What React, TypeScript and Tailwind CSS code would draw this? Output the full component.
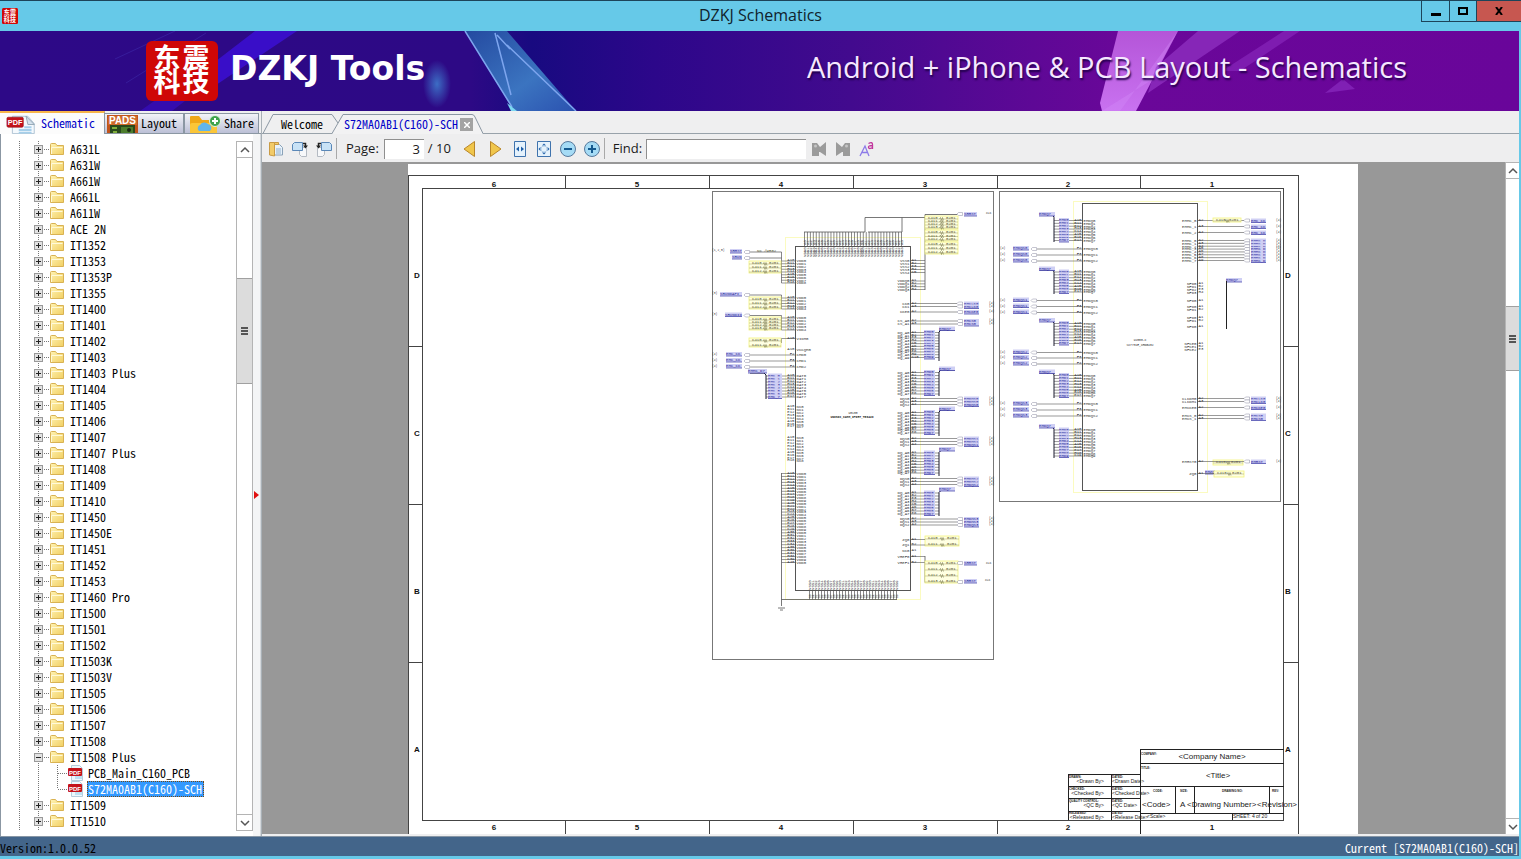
import React from "react";

const NAMES_TOP = [
  "A631L", "A631W", "A661W", "A661L", "A611W", "ACE 2N", "IT1352", "IT1353", "IT1353P", "IT1355",
  "IT1400", "IT1401", "IT1402", "IT1403", "IT1403 Plus", "IT1404", "IT1405", "IT1406", "IT1407",
  "IT1407 Plus", "IT1408", "IT1409", "IT1410", "IT1450", "IT1450E", "IT1451", "IT1452", "IT1453",
  "IT1460 Pro", "IT1500", "IT1501", "IT1502", "IT1503K", "IT1503V", "IT1505", "IT1506", "IT1507",
  "IT1508",
];
const NAMES_BOTTOM = ["IT1509", "IT1510"];

const SONG = "[font-family:'Noto_Sans_CJK_SC',sans-serif] [font-feature-settings:'hwid'] text-xs";
const SEGOE = "[font-family:'Open_Sans','Noto_Sans',sans-serif]";

/* ---------- icons ---------- */

function Seal({ className }: { className: string }) {
  return (
    <svg viewBox="0 0 72 60" preserveAspectRatio="none" overflow="visible" className={className} aria-hidden="true">
      <rect width="72" height="60" rx="6" fill="#cf0707" />
      <g fill="#fff" fontFamily="'Noto Sans CJK SC', sans-serif" fontWeight="700" fontSize="27" textAnchor="middle">
        <text x="21" y="27">东</text>
        <text x="50" y="27">震</text>
        <text x="21" y="51">科</text>
        <text x="50" y="51">技</text>
      </g>
    </svg>
  );
}

function PdfIcon({ className }: { className: string }) {
  return (
    <svg viewBox="0 0 34 20" className={className} aria-hidden="true">
      <path d="M7 1h17l7 8v11H7z" fill="#f4f9fd" stroke="#a9bfd0" />
      <path d="M22 1l9 9h-7z" fill="#d5e3ee" stroke="#7f93a3" strokeWidth=".8" />
      <path d="M20 12h8v2h-8zM14 15h14v2H14zM14 18h14v2H14z" fill="#a5cfea" />
      <rect x="1" y="2" width="18" height="11" rx="1.5" fill="#c4121a" stroke="#8c0a10" strokeWidth=".6" />
      <text x="10" y="10.5" textAnchor="middle" fontSize="8" fontWeight="700" fill="#fff" fontFamily="'Liberation Sans', sans-serif">PDF</text>
    </svg>
  );
}

function PadsIcon() {
  return (
    <svg viewBox="0 0 31 18" className="h-[18px] w-[31px]" aria-hidden="true">
      <rect width="31" height="18" fill="#c1541b" />
      <rect x="1" y="1" width="29" height="9" fill="#ce6a2a" />
      <text x="15.5" y="9" textAnchor="middle" fontSize="10" fontWeight="700" fill="#fff" fontFamily="'Liberation Sans', sans-serif">PADS</text>
      <rect x="3" y="10" width="25" height="8" fill="#2a4a1c" />
      <path d="M5 12h5v2H5zM6 16h4v2H6z" fill="#7fae3a" />
      <path d="M14 12h12v6H14z" fill="#4c7d2c" />
      <circle cx="22" cy="15" r="2" fill="#1b2a12" />
    </svg>
  );
}

function ShareIcon() {
  return (
    <svg viewBox="0 0 32 18" className="h-[18px] w-8" aria-hidden="true">
      <path d="M1 2q0-1 1-1h8l3 4h13q2 0 2 2v11H1z" fill="#f0a818" />
      <path d="M3 8h23q2 0 2 2v8H1v-8q0-2 2-2z" fill="#fbc638" />
      <path d="M10 16a3.500 3.500 0 0 1 1-6 5 5 0 0 1 8-1 4 4 0 0 1 2 7z" fill="#62b5ea" />
      <circle cx="26" cy="6" r="5.500" fill="#3fa34c" stroke="#e3f3e4" />
      <path d="M23 6h6M26 3v6" stroke="#fff" strokeWidth="2" />
    </svg>
  );
}

function Folder() {
  return (
    <svg viewBox="0 0 14 12" className="h-3 w-3.5 shrink-0" aria-hidden="true">
      <defs>
        <linearGradient id="folder" x1="0" y1="0" x2="1" y2="1">
          <stop offset="0" stopColor="#fff3b4" />
          <stop offset="1" stopColor="#f1cf62" />
        </linearGradient>
      </defs>
      <path d="M.5 11.500V1.500q0-1 1-1h4l1.500 2h6.500v9z" fill="url(#folder)" stroke="#d9b253" />
      <path d="M1.500 11V4.500h11" stroke="#fff9d8" fill="none" />
    </svg>
  );
}

function Branch({ open }: { open: boolean }) {
  return (
    <svg viewBox="0 0 50 16" className="h-4 w-[50px] shrink-0" aria-hidden="true" shapeRendering="crispEdges">
      <path d="M19.500 0v16M38.500 0v16M44 8.500h5" stroke="#777" strokeDasharray="1 1" />
      <rect x="34.500" y="4.500" width="8" height="8" fill="#e2e2e2" stroke="#999" />
      <path d={open ? "M36 8.500h5" : "M36 8.500h5M38.500 6v5"} stroke="#222" />
    </svg>
  );
}

function LeafBranch({ last }: { last: boolean }) {
  return (
    <svg viewBox="0 0 68 16" className="h-4 w-[68px] shrink-0" aria-hidden="true" shapeRendering="crispEdges">
      <path d={`M19.500 0v16M38.500 0v16M57.500 0v${last ? 8 : 16}M58 8.500h9`} stroke="#777" strokeDasharray="1 1" fill="none" />
    </svg>
  );
}

/* ---------- tree ---------- */

function FolderRow({ name, open = false }: { name?: string; open?: boolean }) {
  return (
    <div className="flex h-4 items-center">
      <Branch open={open} />
      <Folder />
      {name && <a href="#" className="ml-[5px] whitespace-pre px-px leading-4 text-black">{name}</a>}
    </div>
  );
}

function FileRow({ name, selected = false }: { name: string; selected?: boolean }) {
  return (
    <div className="flex h-4 items-center">
      <LeafBranch last={selected} />
      <svg viewBox="0 0 16 16" className="size-4 shrink-0" aria-hidden="true">
        <path d="M3.500 .5h8l3 3v12h-11z" fill="#eef7fc" stroke="#b5cddc" />
        <path d="M7 11h7M7 13h7" stroke="#8ccbe8" />
        <rect x="0" y="3" width="14" height="8" rx="1" fill="#c4121a" />
        <text x="7" y="9.500" textAnchor="middle" fontSize="6" fontWeight="700" fill="#fff" fontFamily="'Liberation Sans', sans-serif">PDF</text>
      </svg>
      <a
        href="#"
        className={
          selected
            ? "ml-[3px] border border-dotted border-[#7a4a10] bg-[#3399ff] pr-px leading-[14px] text-white"
            : "ml-[3px] border border-transparent leading-[14px] text-black"
        }
      >
        {name}
      </a>
    </div>
  );
}

function Chevron({ down = false }: { down?: boolean }) {
  return (
    <svg viewBox="0 0 10 10" className="size-2.5" aria-hidden="true">
      <path d={down ? "M1 3l4 4 4-4" : "M1 7l4-4 4 4"} stroke="#555" strokeWidth="1.500" fill="none" />
    </svg>
  );
}

function Grip() {
  return (
    <svg viewBox="0 0 8 8" className="size-2" aria-hidden="true" shapeRendering="crispEdges">
      <path d="M0 1h7M0 4h7M0 7h7" stroke="#555" strokeWidth="2" />
    </svg>
  );
}

/* ---------- schematic drawing ---------- */

const INK = "#555555";
const BLUE = "#3434a4";

function range(a: number, b: number, n: number): number[] {
  if (n === 1) return [a];
  return Array.from({ length: n }, (_, i) => a + ((b - a) * i) / (n - 1));
}

function Tiny({ x, y, t, end = false, fill = "#333", size = 4 }: { x: number; y: number; t: string; end?: boolean; fill?: string; size?: number }) {
  return (
    <text x={x} y={y + 1.4} fontSize={size} fill={fill} textAnchor={end ? "end" : "start"}>
      {t}
    </text>
  );
}

function Net({ x, y, t, w }: { x: number; y: number; t: string; w: number }) {
  return (
    <g>
      <rect x={x} y={y - 2} width={w} height="4" fill="#cfcff4" />
      <Tiny x={x} y={y} t={t} fill="#1c1c96" />
      <path d={`M${x} ${y + 2}h${w}`} stroke={BLUE} strokeWidth=".7" />
    </g>
  );
}

function Port({ x, y }: { x: number; y: number }) {
  return <path d={`M${x} ${y}l1.500-1.500h4v3h-4z`} fill="#fff" stroke="#8a8aa0" strokeWidth=".5" />;
}

function PinsLeft({ edge, from, to, n, wire, label = "VDD" }: { edge: number; from: number; to: number; n: number; wire?: number; label?: string }) {
  return (
    <g>
      {range(from, to, n).map((y, i) => (
        <g key={i}>
          {wire !== undefined && <path d={`M${wire} ${y}H${edge}`} stroke={INK} strokeWidth=".6" />}
          <Tiny x={edge - 1} y={y - 1} t={`${"ABEHK"[i % 5]}${10 + i}`} end />
          <Tiny x={edge + 1} y={y} t={`${label}${i % 10}`} />
        </g>
      ))}
    </g>
  );
}

function PinsRight({ edge, from, to, n, wire, label = "VSS" }: { edge: number; from: number; to: number; n: number; wire?: number; label?: string }) {
  return (
    <g>
      {range(from, to, n).map((y, i) => (
        <g key={i}>
          {wire !== undefined && <path d={`M${edge} ${y}H${wire}`} stroke={INK} strokeWidth=".6" />}
          <Tiny x={edge - 1} y={y} t={`${label}${i % 10}`} end />
          <Tiny x={edge + 1} y={y - 1} t={`${"ABEHK"[i % 5]}${i + 1}`} />
        </g>
      ))}
    </g>
  );
}

function PortsRight({ edge, px, ys, label, t }: { edge: number; px: number; ys: number[]; label: string; t: string }) {
  return (
    <g>
      {ys.map((y, i) => (
        <g key={i}>
          <path d={`M${edge} ${y}H${px}`} stroke={INK} strokeWidth=".6" />
          <Tiny x={edge - 1} y={y} t={`${label}${i}`} end />
          <Tiny x={edge + 1} y={y - 1} t={`A${i + 2}`} />
          <Port x={px} y={y} />
          <Net x={px + 7} y={y} t={t} w={15} />
          <Tiny x={px + 32} y={y - 1} t="(4)" size={3} />
        </g>
      ))}
    </g>
  );
}

function PortsLeft({ edge, px, ys, label, t, page }: { edge: number; px: number; ys: number[]; label: string; t: string; page: number }) {
  return (
    <g>
      {ys.map((y, i) => (
        <g key={i}>
          <path d={`M${px + 6} ${y}H${edge}`} stroke={INK} strokeWidth=".6" />
          <Tiny x={edge + 1} y={y} t={`${label}${i}`} />
          <Tiny x={edge - 1} y={y - 1} t={`F${i + 2}`} end />
          <Port x={px} y={y} />
          <Net x={px - 18} y={y - 1} t={t} w={16} />
          <Tiny x={page} y={y - 1} t="(4)" size={3} />
        </g>
      ))}
    </g>
  );
}

function BusRight({ from, to, n, top, bottom }: { from: number; to: number; n: number; top: number; bottom: number }) {
  return (
    <g>
      <PinsRight edge={910.5} from={from} to={to} n={n} wire={939} label="DQ_A" />
      {range(from, to, n).map((y, i) => (
        <Net key={i} x={924} y={y - 0.5} t={`EMD${i}`} w={11} />
      ))}
      <path d={`M955 ${top}H941l-2 2V${bottom}`} stroke="#1a1a2e" fill="none" />
      <Net x={939} y={top - 1.5} t="EMDQ7" w={16} />
    </g>
  );
}

function BusLeft({ from, to, n, top, bottom }: { from: number; to: number; n: number; top: number; bottom: number }) {
  return (
    <g>
      <PinsLeft edge={1082.5} from={from} to={to} n={n} wire={1054} label="EMDQ" />
      {range(from, to, n).map((y, i) => (
        <Net key={i} x={1059} y={y - 0.5} t={`EMD${i}`} w={10} />
      ))}
      <path d={`M1040 ${top}H1053l1 2V${bottom}`} stroke="#1a1a2e" fill="none" />
      <Net x={1039} y={top - 1.5} t="EMDQ7" w={16} />
    </g>
  );
}

function Parts({ x, y, w, h, n }: { x: number; y: number; w: number; h: number; n: number }) {
  return (
    <g>
      <rect x={x} y={y} width={w} height={h} fill="#ffffe2" stroke="#f3f37c" strokeWidth=".8" />
      {range(y + 2, y + h - 2, n).map((v, i) => (
        <g key={i}>
          <path d={`M${x} ${v + 1}H${x + w}`} stroke="#8c8c50" strokeWidth=".4" />
          <Tiny x={x + 3} y={v} t={`C${410 + i}`} fill="#55552a" />
          <path d={`M${x + w / 2 - 2} ${v + 1}l1-1.500 1 3 1-3 1 3`} stroke="#66663a" strokeWidth=".5" fill="none" />
          <Tiny x={x + w - 12} y={v} t="0201" fill="#55552a" />
        </g>
      ))}
    </g>
  );
}

function MainChip() {
  return (
    <g>
      <rect x="785.500" y="237.500" width="135" height="362" fill="none" stroke="#fbfbc0" />
      <rect x="712.500" y="191.500" width="281" height="468" fill="none" stroke="#777" />
      <rect x="795.500" y="246.500" width="115" height="344" fill="none" stroke={INK} />

      {range(804.5, 901.5, 34).map((x, i) => (
        <g key={i}>
          <path d={`M${x} 232V246`} stroke={INK} strokeWidth=".7" />
          <text transform={`translate(${x + 1.2} 257) rotate(-90)`} fontSize="4" fill="#333">VDD{i % 10}</text>
          <text transform={`translate(${x + 1.2} 245) rotate(-90)`} fontSize="4" fill="#444">A{i % 10}</text>
        </g>
      ))}
      <path d="M804 232H865V217.500H925M868 232H902V217.500M925 214.500V290M925 214.500H957" stroke={INK} strokeWidth=".8" fill="none" />
      <Port x={957} y={214} />
      <Net x={964} y={214} t="SRRST" w={13} />
      <Tiny x={986} y={213} t="CLK" size={3} />
      <Parts x={925} y={216} w={33} h={13} n={4} />
      <Parts x={925} y={230} w={33} h={11} n={3} />
      <Parts x={925} y={242} w={33} h={12} n={3} />

      <Tiny x={712} y={250} t="(1,2,5)" size={3} />
      <Net x={730} y={251} t="SRRST" w={12} />
      <Net x={732} y={257} t="SRVD" w={10} />
      <Port x={744} y={252} />
      <Port x={744} y={258} />
      <Tiny x={757} y={251} t="NC /WR02" fill="#55552a" />
      <path d="M750 252H781.500V283M750 258H781.500M750 295H781.500V309M750 315.500H781.500V330M781.500 338.500V343" stroke={INK} strokeWidth=".7" fill="none" />
      <Parts x={749} y={261} w={32} h={12} n={3} />
      <PinsLeft edge={795.5} from={261} to={283} n={9} wire={781.5} />
      <Tiny x={712} y={293} t="(3)" size={3} />
      <Net x={720} y={294} t="SRVDDAPI" w={22} />
      <Port x={744} y={295} />
      <Parts x={749} y={297} w={32} h={12} n={3} />
      <PinsLeft edge={795.5} from={298} to={309} n={5} wire={781.5} />
      <Tiny x={712} y={314} t="(3)" size={3} />
      <Net x={725} y={314.5} t="SRVDDIO" w={17} />
      <Port x={744} y={315.5} />
      <Parts x={749} y={317} w={32} h={13} n={4} />
      <PinsLeft edge={795.5} from={318} to={330} n={5} wire={781.5} />
      <Parts x={749} y={338} w={32} h={9} n={2} />
      <PinsLeft edge={795.5} from={338.5} to={338.5} n={1} wire={781.5} label="VIOM" />
      <PinsLeft edge={795.5} from={350} to={350} n={1} label="VCCQM" />
      <PortsLeft edge={795.5} px={744} ys={[355, 361, 367]} label="CMD" t="EMC_CK" page={712} />
      <PinsLeft edge={795.5} from={376} to={397} n={8} wire={766} label="DAT" />
      {range(376, 397, 8).map((y, i) => (
        <Net key={i} x={768} y={y - 0.5} t={`EMC_${i}`} w={14} />
      ))}
      <path d="M750 373H764l2 2V399" stroke="#1a1a2e" fill="none" />
      <Net x={748} y={371} t="EMMC_D7" w={19} />
      <PinsLeft edge={795.5} from={407} to={427} n={8} label="NC" />
      <PinsLeft edge={795.5} from={438} to={461} n={9} label="NC" />
      <PinsLeft edge={795.5} from={473.5} to={562.5} n={31} wire={781.5} />
      <path d="M781.500 473V606M778 608H785M780 610h3M781.500 599.500H897" stroke={INK} strokeWidth=".8" fill="none" />

      {range(809.5, 896.5, 30).map((x, i) => (
        <g key={i}>
          <path d={`M${x} 590V599.500`} stroke={INK} strokeWidth=".7" />
          <text transform={`translate(${x + 1.2} 590) rotate(-90)`} fontSize="4" fill="#333">VSS{i % 10}</text>
          <text transform={`translate(${x + 1.2} 598) rotate(-90)`} fontSize="3" fill="#444">B{i % 10}</text>
        </g>
      ))}

      <text x="853" y="413.500" fontSize="3" textAnchor="middle" fill="#222">U0100</text>
      <text x="852" y="418" fontSize="3" textAnchor="middle" fill="#222" fontWeight="700">UNISOC_CAMM_IPORT_TE6429</text>

      <PinsRight edge={910.5} from={260.5} to={272.5} n={5} wire={925} />
      <PinsRight edge={910.5} from={281} to={289.5} n={4} wire={925} label="VDDQ" />
      <PortsRight edge={910.5} px={957} ys={[303.5, 306.5]} label="CK" t="EMCLK0" />
      <PortsRight edge={910.5} px={957} ys={[312]} label="CKE" t="EMCKE0" />
      <PortsRight edge={910.5} px={957} ys={[321, 324]} label="CS_A" t="EMCS0" />
      <BusRight from={332.5} to={357.5} n={10} top={330} bottom={361} />
      <BusRight from={372.5} to={394} n={8} top={370} bottom={396} />
      <PortsRight edge={910.5} px={957} ys={[398.5, 401.5, 404.5]} label="DQS" t="EMDQS0" />
      <BusRight from={412.5} to={433} n={8} top={410} bottom={436} />
      <PortsRight edge={910.5} px={957} ys={[438.5, 441.5, 444.5]} label="DQS" t="EMDQS1" />
      <BusRight from={453} to={473} n={8} top={450.5} bottom={476} />
      <PortsRight edge={910.5} px={957} ys={[478.5, 481.5, 484.5]} label="DQS" t="EMDQS2" />
      <BusRight from={493} to={514} n={8} top={490.5} bottom={516} />
      <PortsRight edge={910.5} px={957} ys={[519, 522, 525]} label="DQS" t="EMDQS3" />
      <Parts x={925} y={536} w={34} h={10} n={2} />
      <PinsRight edge={910.5} from={539.5} to={545} n={2} wire={925} label="ZQ" />
      <PinsRight edge={910.5} from={550.5} to={550.5} n={1} label="NC" />
      <PinsRight edge={910.5} from={556.5} to={562.5} n={2} wire={925} label="VREF" />
      <path d="M925 556V582.500M925 563H957M925 582.500H957" stroke={INK} strokeWidth=".8" fill="none" />
      <Parts x={925} y={561} w={33} h={22} n={4} />
      <Port x={957} y={563} />
      <Port x={957} y={582} />
      <Net x={964} y={563} t="SRRST" w={13} />
      <Net x={964} y={581} t="SRRST" w={13} />
      <Tiny x={986} y={563} t="CLK" size={3} />
      <Tiny x={985} y={580} t="CLK" size={3} />
    </g>
  );
}

function CpuChip() {
  return (
    <g>
      <rect x="1073.500" y="201.500" width="134" height="291" fill="none" stroke="#fbfbc0" />
      <rect x="999.500" y="191.500" width="281" height="310" fill="none" stroke="#777" />
      <rect x="1082.500" y="203.500" width="115" height="287" fill="none" stroke={INK} />
      <BusLeft from={220.5} to={240.5} n={8} top={215.5} bottom={242} />
      <PortsLeft edge={1082.5} px={1031} ys={[249, 255, 261]} label="EMDQS" t="EMDQS0" page={1000} />
      <BusLeft from={272} to={292} n={8} top={270} bottom={294} />
      <PortsLeft edge={1082.5} px={1031} ys={[300.5, 306.5, 312.5]} label="EMDQS" t="EMDQS1" page={1000} />
      <BusLeft from={323.5} to={343.5} n={8} top={321.5} bottom={346} />
      <PortsLeft edge={1082.5} px={1031} ys={[352.5, 358, 364]} label="EMDQS" t="EMDQS2" page={1000} />
      <BusLeft from={375.5} to={396} n={8} top={373} bottom={398} />
      <PortsLeft edge={1082.5} px={1031} ys={[404, 410, 416]} label="EMDQS" t="EMDQS3" page={1000} />
      <BusLeft from={430} to={456} n={10} top={427.5} bottom={458} />

      <PortsRight edge={1197.5} px={1244} ys={[220.5, 226.5, 232.5]} label="EMMC_" t="EMC_CK" />
      <Parts x={1213} y={218} w={28} h={4} n={1} />
      <PortsRight edge={1197.5} px={1244} ys={range(240.5, 260.5, 8)} label="EMMC_" t="EMMC_D" />
      <PinsRight edge={1197.5} from={284} to={292.5} n={4} label="NFD" />
      <PinsRight edge={1197.5} from={300.5} to={300.5} n={1} label="NFD" />
      <PinsRight edge={1197.5} from={306.5} to={309.5} n={2} label="NFD" />
      <PinsRight edge={1197.5} from={318} to={321} n={2} label="NFD" />
      <PinsRight edge={1197.5} from={327} to={327} n={1} label="NFD" />
      <PinsRight edge={1197.5} from={343.5} to={349.5} n={3} label="NFCE" />
      <Net x={1226} y={280} t="EMDQ7" w={16} />
      <path d="M1226.500 281V329" stroke="#222" />
      <PortsRight edge={1197.5} px={1244} ys={[398.5, 401.5]} label="CLKDM" t="EMCLK0" />
      <PortsRight edge={1197.5} px={1244} ys={[407.5]} label="EMCKE" t="EMCKE0" />
      <PortsRight edge={1197.5} px={1244} ys={[415.5, 418.5]} label="EMCS_" t="EMCS0" />
      <Parts x={1213} y={460} w={30} h={5} n={1} />
      <PortsRight edge={1197.5} px={1244} ys={[461.5]} label="EMRST" t="EMRST" />
      <Net x={1205} y={472} t="EMZQ" w={10} />
      <Parts x={1214} y={471} w={30} h={6} n={1} />
      <PinsRight edge={1197.5} from={473.5} to={473.5} n={1} wire={1214} label="ZQ" />
      <text x="1140" y="341" fontSize="3" textAnchor="middle" fill="#222">U2000-C</text>
      <text x="1140" y="346" fontSize="3" textAnchor="middle" fill="#222">SC7731E_CHDG402</text>
    </g>
  );
}

function TitleBlock() {
  const people: [number, string, string, string, string][] = [
    [774, "DRAWN:", "<Drawn By>", "DATED:", "<Drawn Date>"],
    [786, "CHECKED:", "<Checked By>", "DATED:", "<Checked Date>"],
    [798, "QUALITY CONTROL:", "<QC By>", "DATED:", "<QC Date>"],
    [810, "RELEASED:", "<Released By>", "DATED:", "<Release Date>"],
  ];
  return (
    <g fill="#222" fontFamily="'Liberation Sans', sans-serif">
      <g fill="none" stroke="#222" shapeRendering="crispEdges">
        <path d="M1140.500 749.500H1283.500M1140.500 749V834M1140.500 763.500H1283.500M1140.500 786.500H1283.500M1140.500 813.500H1283.500" />
        <path d="M1175.500 786V813M1194.500 786V813M1269.500 786V813M1232.500 813V820" />
        <path d="M1068.500 774.500H1140.500M1068.500 774V820M1111.500 774V820M1068.500 786.500H1140.500M1068.500 798.500H1140.500M1068.500 811.500H1140.500" />
      </g>
      <g fontSize="3" fontWeight="700">
        <text x="1141" y="755">COMPANY:</text>
        <text x="1141" y="769">TITLE:</text>
        <text x="1153" y="792">CODE:</text>
        <text x="1180" y="792">SIZE:</text>
        <text x="1222" y="792">DRAWING NO:</text>
        <text x="1272" y="792">REV:</text>
        {people.map(([y, a, , c]) => (
          <React.Fragment key={y}>
            <text x="1069" y={y + 4}>{a}</text>
            <text x="1112" y={y + 4}>{c}</text>
          </React.Fragment>
        ))}
      </g>
      <g fontSize="5">
        {people.map(([y, , b, , d]) => (
          <React.Fragment key={y}>
            <text x="1104" y={y + 9} textAnchor="end">{b}</text>
            <text x="1112" y={y + 9}>{d}</text>
          </React.Fragment>
        ))}
        <text x="1147" y="818">&lt;Scale&gt;</text>
        <text x="1233" y="818">SHEET: 4 of 20</text>
      </g>
      <g fontSize="8">
        <text x="1212" y="759" textAnchor="middle">&lt;Company Name&gt;</text>
        <text x="1218" y="778" textAnchor="middle">&lt;Title&gt;</text>
        <text x="1142" y="807">&lt;Code&gt;</text>
        <text x="1180" y="807">A</text>
        <text x="1187" y="807">&lt;Drawing Number&gt;</text>
        <text x="1257" y="807">&lt;Revision&gt;</text>
      </g>
    </g>
  );
}

function Sheet() {
  const cols: [number, string][] = [[494, "6"], [637, "5"], [781, "4"], [925, "3"], [1068, "2"], [1212, "1"]];
  const rows: [number, string][] = [[275, "D"], [433, "C"], [591, "B"], [749, "A"]];
  return (
    <svg viewBox="408 164 950 670" className="h-full w-auto bg-white" role="img" aria-label="Schematic sheet 3" fontFamily="'Liberation Mono', monospace">
      <g fill="none" stroke="#444" shapeRendering="crispEdges">
        <path d="M408 175.500H1298.500V834M408.500 175V834" />
        <rect x="422.500" y="188.500" width="861" height="632" />
        {[565.5, 709.5, 853.5, 997.5, 1140.5].map((x) => (
          <path key={x} d={`M${x} 175V188M${x} 821V834`} />
        ))}
        {[346.5, 504.5, 662.5].map((y) => (
          <path key={y} d={`M408 ${y}H422M1284 ${y}H1298`} />
        ))}
      </g>
      <g fontSize="8" fontWeight="700" textAnchor="middle" fill="#111" fontFamily="'Liberation Sans', sans-serif">
        {cols.map(([x, t]) => (
          <React.Fragment key={t}>
            <text x={x} y="187">{t}</text>
            <text x={x} y="830">{t}</text>
          </React.Fragment>
        ))}
        {rows.map(([y, t]) => (
          <React.Fragment key={t}>
            <text x="417" y={y + 3}>{t}</text>
            <text x="1288" y={y + 3}>{t}</text>
          </React.Fragment>
        ))}
      </g>
      <MainChip />
      <CpuChip />
      <TitleBlock />
    </svg>
  );
}

/* ---------- chrome ---------- */

function TitleBar() {
  return (
    <header className="flex h-[31px] shrink-0 border-t border-[#1d4459] bg-[#66c9e8]">
      <div className="flex w-[100px] items-center pl-0.5">
        <Seal className="size-4" />
      </div>
      <h1 className={`${SEGOE} flex-1 text-center text-base leading-7 text-[#10222c]`}>DZKJ Schematics</h1>
      <div className="flex h-[21px] w-[100px] justify-end">
        <button aria-label="Minimize" className="flex w-[29px] items-center justify-center border border-t-0 border-[#1d4459]">
          <span className="mt-1.5 h-[3px] w-2.5 bg-black" />
        </button>
        <button aria-label="Maximize" className="flex w-[26px] items-center justify-center border-b border-[#1d4459]">
          <span className="h-2 w-2.5 border-2 border-black" />
        </button>
        <button aria-label="Close" className="flex w-[45px] items-center justify-center border-b border-l border-[#1d4459] bg-[#c75750]">
          <svg viewBox="0 0 8 8" className="size-2" aria-hidden="true">
            <path d="M1 0l6 8M7 0L1 8" stroke="#000" strokeWidth="2" />
          </svg>
        </button>
      </div>
    </header>
  );
}

function Banner() {
  return (
    <div className="relative h-20 shrink-0 overflow-hidden">
      <svg viewBox="0 0 1519 80" preserveAspectRatio="none" className="absolute inset-0 size-full" aria-hidden="true">
        <defs>
          <linearGradient id="bg" x1="0" x2="1" y1="0" y2="0">
            <stop offset="0" stopColor="#2d0987" />
            <stop offset=".31" stopColor="#2d0985" />
            <stop offset=".35" stopColor="#180a80" />
            <stop offset=".43" stopColor="#2c078a" />
            <stop offset=".56" stopColor="#420a8e" />
            <stop offset=".68" stopColor="#5e0896" />
            <stop offset=".74" stopColor="#6a0799" />
            <stop offset="1" stopColor="#69059a" />
          </linearGradient>
          <linearGradient id="shard" x1="0" x2="1" y1="0" y2="1">
            <stop offset="0" stopColor="#244aa0" />
            <stop offset=".6" stopColor="#3b74c0" />
            <stop offset="1" stopColor="#2b52b0" />
          </linearGradient>
          <linearGradient id="pink" x1="0" x2="0" y1="0" y2="1">
            <stop offset="0" stopColor="#b455d8" />
            <stop offset="1" stopColor="#c972f0" />
          </linearGradient>
          <radialGradient id="glow">
            <stop offset="0" stopColor="#3f7fd0" stopOpacity=".85" />
            <stop offset="1" stopColor="#3f7fd0" stopOpacity="0" />
          </radialGradient>
        </defs>
        <rect width="1519" height="80" fill="url(#bg)" />
        <path d="M255 0H297L216 54V30z" fill="#3c10d8" opacity=".8" />
        <path d="M206 2l-80 50M175 0l-60 28" stroke="#4030b0" opacity=".5" />
        <path d="M140 80l20-14h30l-18 14z" fill="#3c10d8" opacity=".5" />
        <ellipse cx="437" cy="53" rx="14" ry="24" fill="url(#glow)" />
        <path d="M465 0H507L576 80H514z" fill="url(#shard)" />
        <path d="M465 0L512 76M495 2L511 64M507 14L576 80M497 4l13 14" stroke="#7da5ee" strokeWidth="1.500" fill="none" />
        <path d="M507 72l10 8h-6z" fill="#7ad8f0" />
        <path d="M1118 0H1178L1136 80H1102L1100 72z" fill="url(#pink)" />
        <path d="M1178 0L1120 80H1102L1150 50z" fill="#d58cf8" opacity=".35" />
        <path d="M1198 0H1240L1148 62L1156 36z" fill="#9a3ccb" opacity=".6" />
        <path d="M1284 0H1300L1240 40H1222z" fill="#8c2cc0" opacity=".6" />
        <path d="M1325 62l18-14 12 10z" fill="#8020b4" />
      </svg>
      <div className={`${SEGOE} relative flex h-full items-center pl-[146px] pr-28 text-white`}>
        <Seal className="h-[60px] w-[72px] shrink-0" />
        <span className="ml-3 whitespace-nowrap pb-1 text-[33px] font-bold leading-10 [font-family:'DejaVu_Sans',sans-serif]">DZKJ Tools</span>
        <span className="ml-auto whitespace-nowrap pb-2 text-[29px] leading-10 text-[#f6e8ff] [text-shadow:1px_2px_2px_#20004a]">
          Android + iPhone &amp; PCB Layout - Schematics
        </span>
      </div>
    </div>
  );
}

const SIDE_TAB = "flex items-end gap-[3px] border border-[#8b97a3] bg-linear-to-b from-[#f2f3f8] to-[#bcc0d6] leading-[18px]";

function Sidebar() {
  return (
    <aside className="flex w-[261px] shrink-0 flex-col bg-[#fcfcfc]">
      <nav className={`${SONG} flex h-[23px] shrink-0 items-end border-b border-[#8b97a3] bg-[#efeff0]`} aria-label="Libraries">
        <button className="-mb-px flex h-[23px] w-[105px] items-end gap-1 border-r border-t-2 border-r-[#8b97a3] border-t-[#f7b54a] bg-[#fcfcfc] pl-1.5 leading-[18px] text-[#0000c8]">
          <PdfIcon className="h-[19px] w-[31px]" />
          <span className="pb-0.5">Schematic</span>
        </button>
        <button className={`${SIDE_TAB} h-5 w-[79px] border-b-0 border-l-0 pl-0.5`}>
          <PadsIcon />
          <span className="pb-px">Layout</span>
        </button>
        <button className={`${SIDE_TAB} h-5 w-[75px] border-b-0 pl-1`}>
          <ShareIcon />
          <span className="pb-px">Share</span>
        </button>
      </nav>
      <div className="flex min-h-0 flex-1">
        <div className="flex min-w-0 flex-1 border-l border-[#8b97a3] bg-white pb-[5px] pt-[7px]">
          <div className={`${SONG} -ml-px min-w-0 flex-1 overflow-hidden`}>
            {NAMES_TOP.map((n) => (
              <FolderRow key={n} name={n} />
            ))}
            <FolderRow name="IT1508 Plus" open />
            <FileRow name="PCB_Main_C160_PCB" />
            <FileRow name="S72MA0AB1(C160)-SCH" selected />
            {NAMES_BOTTOM.map((n) => (
              <FolderRow key={n} name={n} />
            ))}
            <FolderRow />
          </div>
          <div className="flex w-[17px] flex-col border border-[#b4b4b4] bg-white">
            <button aria-label="Scroll up" className="flex h-4 items-center justify-center border-b border-[#b4b4b4]"><Chevron /></button>
            <div className="grow-[120] basis-0" />
            <div className="flex grow-[104] basis-0 items-center justify-center border-y border-[#a0a0a0] bg-[#dcdcdc]"><Grip /></div>
            <div className="grow-[431] basis-0" />
            <button aria-label="Scroll down" className="flex h-4 items-center justify-center border-t border-[#b4b4b4]"><Chevron down /></button>
          </div>
        </div>
        <div className="flex w-2 items-center border-r border-[#d4d8dc] bg-[#f4f5f6] pt-5">
          <svg viewBox="0 0 5 8" className="ml-px h-2 w-[5px]" aria-hidden="true">
            <path d="M0 0l5 4-5 4z" fill="#e01010" />
          </svg>
        </div>
      </div>
    </aside>
  );
}

function DocTabs() {
  return (
    <nav className={`${SONG} relative flex h-[23px] shrink-0 border-b border-[#98a2aa]`} aria-label="Documents">
      <svg viewBox="0 0 230 23" className="absolute left-0 top-0 h-[23px] w-[230px]" aria-hidden="true">
        <path d="M1 22.500L11 3.500H70L76 12" fill="none" stroke="#8b97a3" />
        <path d="M70 23L81 3.500H210Q212 3.500 213 6L221 23z" fill="#f2f2f3" />
        <path d="M70 22.500L81 3.500H210Q212 3.500 213 6L221 22.500" fill="none" stroke="#8b97a3" />
      </svg>
      <button className="relative ml-[19px] mt-1 h-[18px] leading-[18px] text-black">Welcome</button>
      <button className="relative ml-[21px] mt-1 h-[18px] leading-[18px] text-[#0000c8]">S72MA0AB1(C160)-SCH</button>
      <button aria-label="Close tab" className="relative ml-0.5 mt-[7px] flex size-[13px] items-center justify-center bg-[#a3a3a3]">
        <svg viewBox="0 0 6 6" className="size-1.5" aria-hidden="true">
          <path d="M0 0l6 6M6 0L0 6" stroke="#fff" strokeWidth="1.500" />
        </svg>
      </button>
    </nav>
  );
}

function ToolButton({ label, children, w = "w-6" }: { label: string; children: React.ReactNode; w?: string }) {
  return (
    <button aria-label={label} className={`flex h-6 ${w} shrink-0 items-center justify-center`}>
      <svg viewBox="0 0 16 16" className="size-4" aria-hidden="true">{children}</svg>
    </button>
  );
}

function Toolbar() {
  return (
    <div className={`${SEGOE} flex h-7 shrink-0 items-center bg-[#eeeeef] pl-0.5 pt-px text-[13px] text-[#1a1a1a]`} role="toolbar">
      <ToolButton label="Open">
        <path d="M6.500 3.500h5l3 3V14h-8z" fill="#e9f2fa" stroke="#8aa2b8" />
        <path d="M8 8h5M8 10h5M8 12h5" stroke="#8fb0cf" />
        <path d="M1.500 1.500h5v13.500l-5-1z" fill="#f2cb69" stroke="#c99b45" />
        <path d="M6.500 1.500h4v2h-4z" fill="#f2cb69" stroke="#c99b45" />
      </ToolButton>
      <ToolButton label="Rotate right">
        <path d="M7.500 6.500h7v9h-5l-2-2z" fill="#f7f8fa" stroke="#b4bac2" />
        <path d="M2.500 1.500h8v8h-10v-6z" fill="#c8e2f6" stroke="#5b88b8" />
        <path d="M11 2.500h2.500v3" stroke="#222" strokeWidth="1.500" fill="none" />
        <path d="M11 4.500h5L13.500 7.500z" fill="#222" />
      </ToolButton>
      <ToolButton label="Rotate left">
        <path d="M1.500 6.500h7v7l-2 2h-5z" fill="#f7f8fa" stroke="#b4bac2" />
        <path d="M5.500 1.500h8l2 2v6h-10z" fill="#c8e2f6" stroke="#5b88b8" />
        <path d="M5 2.500H2.500v3" stroke="#222" strokeWidth="1.500" fill="none" />
        <path d="M0 4.500h5L2.500 7.500z" fill="#222" />
      </ToolButton>
      <div className="h-[21px] w-px bg-[#a9a9a9]" />
      <label htmlFor="page" className="ml-[9px]">Page:</label>
      <input id="page" defaultValue="3" className="ml-[5px] h-5 w-10 border-l border-t border-[#8f8f8f] bg-white pr-1 text-right" />
      <span className="ml-1 w-[30px] whitespace-nowrap">/ 10</span>
      <ToolButton label="Previous page">
        <path d="M12.500 .5v15L2 8z" fill="#f0c64c" stroke="#b8862a" />
      </ToolButton>
      <ToolButton label="Next page" w="w-[26px]">
        <path d="M3.500 .5v15L14 8z" fill="#f0c64c" stroke="#b8862a" />
      </ToolButton>
      <ToolButton label="Fit width">
        <path d="M2.500 .5h11v15h-11z" fill="#e5f2fc" stroke="#3f73ad" />
        <path d="M7 5.500v5L4 8zM9 5.500v5L12 8z" fill="#1f5fa8" />
      </ToolButton>
      <ToolButton label="Fit page">
        <path d="M1.500 .5h13v15h-13z" fill="#e5f2fc" stroke="#3f73ad" />
        <path d="M8 2.500l2 2H6zM8 13.500l2-2H6zM2.500 8l2-2v4zM13.500 8l-2-2v4z" fill="#1f5fa8" />
        <circle cx="8" cy="8" r="3" fill="none" stroke="#b5d0e8" />
      </ToolButton>
      <ToolButton label="Zoom out">
        <circle cx="8" cy="8" r="7.500" fill="#a5dbf5" stroke="#56799c" />
        <path d="M4 8h8" stroke="#14598f" strokeWidth="2" />
      </ToolButton>
      <ToolButton label="Zoom in">
        <circle cx="8" cy="8" r="7.500" fill="#a5dbf5" stroke="#56799c" />
        <path d="M4 8h8M8 4v8" stroke="#14598f" strokeWidth="2" />
      </ToolButton>
      <div className="h-[21px] w-px bg-[#a9a9a9]" />
      <label htmlFor="find" className="ml-2">Find:</label>
      <input id="find" className="ml-1 h-5 w-40 border-l border-t border-[#8f8f8f] bg-white px-1" />
      <div className="flex pl-px">
        <ToolButton label="Find previous">
          <path d="M1 2h5l3 4 6-5v14l-6-4H8v4H1z" fill="#9b9b9b" />
          <circle cx="4.500" cy="5" r="1.500" fill="#c5c5c5" />
        </ToolButton>
        <ToolButton label="Find next">
          <path d="M15 2h-5L7 6 1 1v14l6-4h1v4h7z" fill="#9b9b9b" />
          <circle cx="11.500" cy="5" r="1.500" fill="#c5c5c5" />
        </ToolButton>
        <ToolButton label="Match case">
          <path d="M1 15L6 5l4 10M3 11.500h6" fill="none" stroke="#8d7be8" strokeWidth="1.300" />
          <path d="M9.500 2.500q4-2 4 1v4.500M13.500 4.500q-4.500 0-4 2t4 0" fill="none" stroke="#c0359c" strokeWidth="1.300" />
        </ToolButton>
      </div>
    </div>
  );
}

function Viewer() {
  return (
    <main className="flex min-w-0 flex-1 flex-col border-l border-[#a8b0b6] bg-[#efeff0]">
      <DocTabs />
      <Toolbar />
      <div className="flex min-h-0 flex-1 pb-0.5">
        <div className="flex min-w-0 flex-1 justify-center overflow-hidden border-t-2 border-[#989898] bg-[#989898] pr-0.5">
          <Sheet />
        </div>
        <div className="flex w-3.5 shrink-0 flex-col border-l border-t border-[#b4b4b4] bg-white">
          <button aria-label="Scroll up" className="flex h-4 items-center justify-center border-b border-[#b4b4b4]"><Chevron /></button>
          <div className="grow-[128] basis-0" />
          <div className="flex grow-[63] basis-0 items-center justify-center border-y border-[#a0a0a0] bg-[#dcdcdc]"><Grip /></div>
          <div className="grow-[449] basis-0" />
          <button aria-label="Scroll down" className="flex h-4 items-center justify-center border-t border-[#b4b4b4]"><Chevron down /></button>
        </div>
      </div>
    </main>
  );
}

export default function App() {
  return (
    <div className="flex h-screen flex-col overflow-hidden bg-[#66c9e8] pb-[3px]">
      <TitleBar />
      <div className="flex min-h-0 flex-1 flex-col pr-0.5">
        <Banner />
        <div className="flex min-h-0 flex-1 bg-[#efeff0]">
          <Sidebar />
          <Viewer />
        </div>
        <footer className={`${SONG} flex h-5 shrink-0 items-end justify-between border-t border-[#8796a5] bg-[#43658a]`}>
          <span className="leading-4 text-black">Version:1.0.0.52</span>
          <span className="leading-4 text-white">Current [S72MA0AB1(C160)-SCH]</span>
        </footer>
      </div>
    </div>
  );
}
